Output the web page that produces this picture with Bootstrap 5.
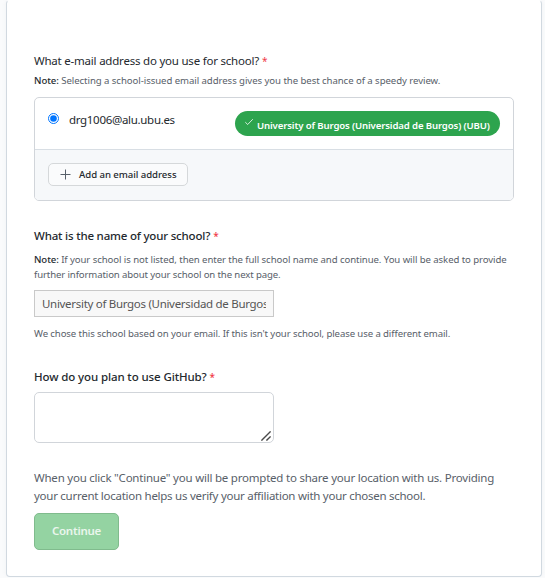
<!DOCTYPE html>
<html lang="en">
<head>
<meta charset="utf-8">
<meta name="viewport" content="width=device-width, initial-scale=1">
<title>School details</title>
<link href="https://cdn.jsdelivr.net/npm/bootstrap@5.3.0/dist/css/bootstrap.min.css" rel="stylesheet">
<style>
body{background:#fafbfc;font-family:"Segoe UI","Noto Sans",sans-serif;font-size:11.5px;line-height:18px;color:#24292e;overflow:hidden}
.panel{width:536px;height:577px;margin-left:6px;padding:51px 27px 0;border-color:#d1d9e0;border-top-color:#fff;border-radius:4px;box-shadow:0 0 4px rgba(149,157,165,.1)}
.question{height:18px;white-space:nowrap}
.strong-q{font-weight:500}
.req{color:#f03a47;font-size:10px}
.note{font-size:9.6px;line-height:15px;color:#586069;white-space:nowrap}
.note b{font-weight:500;color:#24292e}
.line{display:block;width:max-content}
.t1{letter-spacing:-.215px}.t2{letter-spacing:-.19px}.t3{letter-spacing:-.11px}
.n1{letter-spacing:-.06px}.n2{letter-spacing:-.078px}.n3{letter-spacing:-.12px}.n4{letter-spacing:-.1px}
.c1{letter-spacing:-.22px}.c2{letter-spacing:-.265px}
.note-email{margin-top:3px}
.emails{height:104px;margin-top:9px;border-color:#d1d5da!important;border-radius:5px;overflow:hidden}
.email-row{height:51px;padding:0 13px}
.email-row input{width:11px;height:11px;margin:0 10px 11px 0;accent-color:#0075ff;flex:none}
.email-name{padding-bottom:8px;letter-spacing:-.31px}
.school-pill{width:265px;height:25px;border-radius:13px;background:#2da44e;color:#fff;font-size:9.6px;font-weight:600;padding-left:10px;white-space:nowrap;letter-spacing:-.13px}
.school-pill svg{flex:none}
.email-foot{height:51px;background:#f6f8fa;border-color:#d8dee4!important;padding:13px}
.add-btn{width:140px;height:23px;font-size:9.6px;line-height:14px;font-weight:500;border:1px solid #d5d8da;border-radius:5px;background:#fafbfc;padding:0 0 0 11px;color:#24292e;white-space:nowrap;letter-spacing:-.05px}
.school{padding:26px 0 27px}
.note-school{margin:7px 0 8px}
.note-chosen{margin-top:9px}
.school-input{width:240px;height:27px;border:1px solid #c9c9c9;border-radius:0;background:#f8f8f8;color:#555;font-size:11.5px;padding:0 7px;letter-spacing:-.3px}
.plan-box{width:240px;margin-top:6px}
.plan{height:51px;border:1px solid #d1d5da;border-radius:5px;padding:4px;resize:none}
.grip{right:3px;bottom:2px}
.consent{color:#586069;white-space:nowrap;margin:26px 0 8px}
.go{display:block;width:85px;height:37px;font-size:11.5px;font-weight:600;line-height:18px;letter-spacing:-.25px;color:#eaf6ed;background:#94d3a2;border:1px solid #80bb8d;border-radius:5px;padding:0 0 2px}
</style>
</head>
<body>
<main class="panel card">
<form>
<section>
<div class="question"><span class="t1">What e-mail address do you use for school?</span> <span class="req">*</span></div>
<div class="note note-email"><span class="line n1"><b>Note:</b> Selecting a school-issued email address gives you the best chance of a speedy review.</span></div>
<div class="emails border">
<div class="email-row d-flex align-items-center">
<input type="radio" checked aria-label="drg1006@alu.ubu.es"><span class="email-name">drg1006@alu.ubu.es</span>
<span class="school-pill ms-auto d-flex align-items-center"><svg class="mb-1" width="8" height="8" viewBox="0 0 8 8" fill="none" stroke="#fff" stroke-width=".8"><path d="M.3 4.2 2.7 6.5 7.8 1.2"/></svg><span class="ms-1 pt-1">University of Burgos (Universidad de Burgos) (UBU)</span></span>
</div>
<div class="email-foot border-top"><button type="button" class="btn add-btn d-flex align-items-center"><svg width="11" height="11" viewBox="0 0 11 11" stroke="#57606a" fill="none"><path d="M5.5.5v10M.5 5.5h10"/></svg><span class="ms-2">Add an email address</span></button></div>
</div>
</section>
<section class="school">
<div class="question strong-q"><span class="t2">What is the name of your school?</span> <span class="req">*</span></div>
<div class="note note-school"><span class="line n2"><b>Note:</b> If your school is not listed, then enter the full school name and continue. You will be asked to provide</span><span class="line n3">further information about your school on the next page.</span></div>
<input class="school-input form-control" value="University of Burgos (Universidad de Burgos)" aria-label="School name">
<div class="note note-chosen"><span class="line n4">We chose this school based on your email. If this isn't your school, please use a different email.</span></div>
</section>
<section>
<div class="question strong-q"><span class="t3">How do you plan to use GitHub?</span> <span class="req">*</span></div>
<div class="plan-box position-relative"><textarea class="plan form-control" aria-label="Plan"></textarea><svg class="grip position-absolute" width="10" height="10" viewBox="0 0 10 10" stroke="#4a4a4a" stroke-width="1.4"><path d="M.4 9.6 9.6.4M5.4 9.6 9.6 5.4"/></svg></div>
</section>
<div class="consent"><span class="line c1">When you click "Continue" you will be prompted to share your location with us. Providing</span><span class="line c2">your current location helps us verify your affiliation with your chosen school.</span></div>
<button type="button" class="btn go">Continue</button>
</form>
</main>
<script src="https://cdn.jsdelivr.net/npm/bootstrap@5.3.0/dist/js/bootstrap.bundle.min.js"></script>
</body>
</html>
